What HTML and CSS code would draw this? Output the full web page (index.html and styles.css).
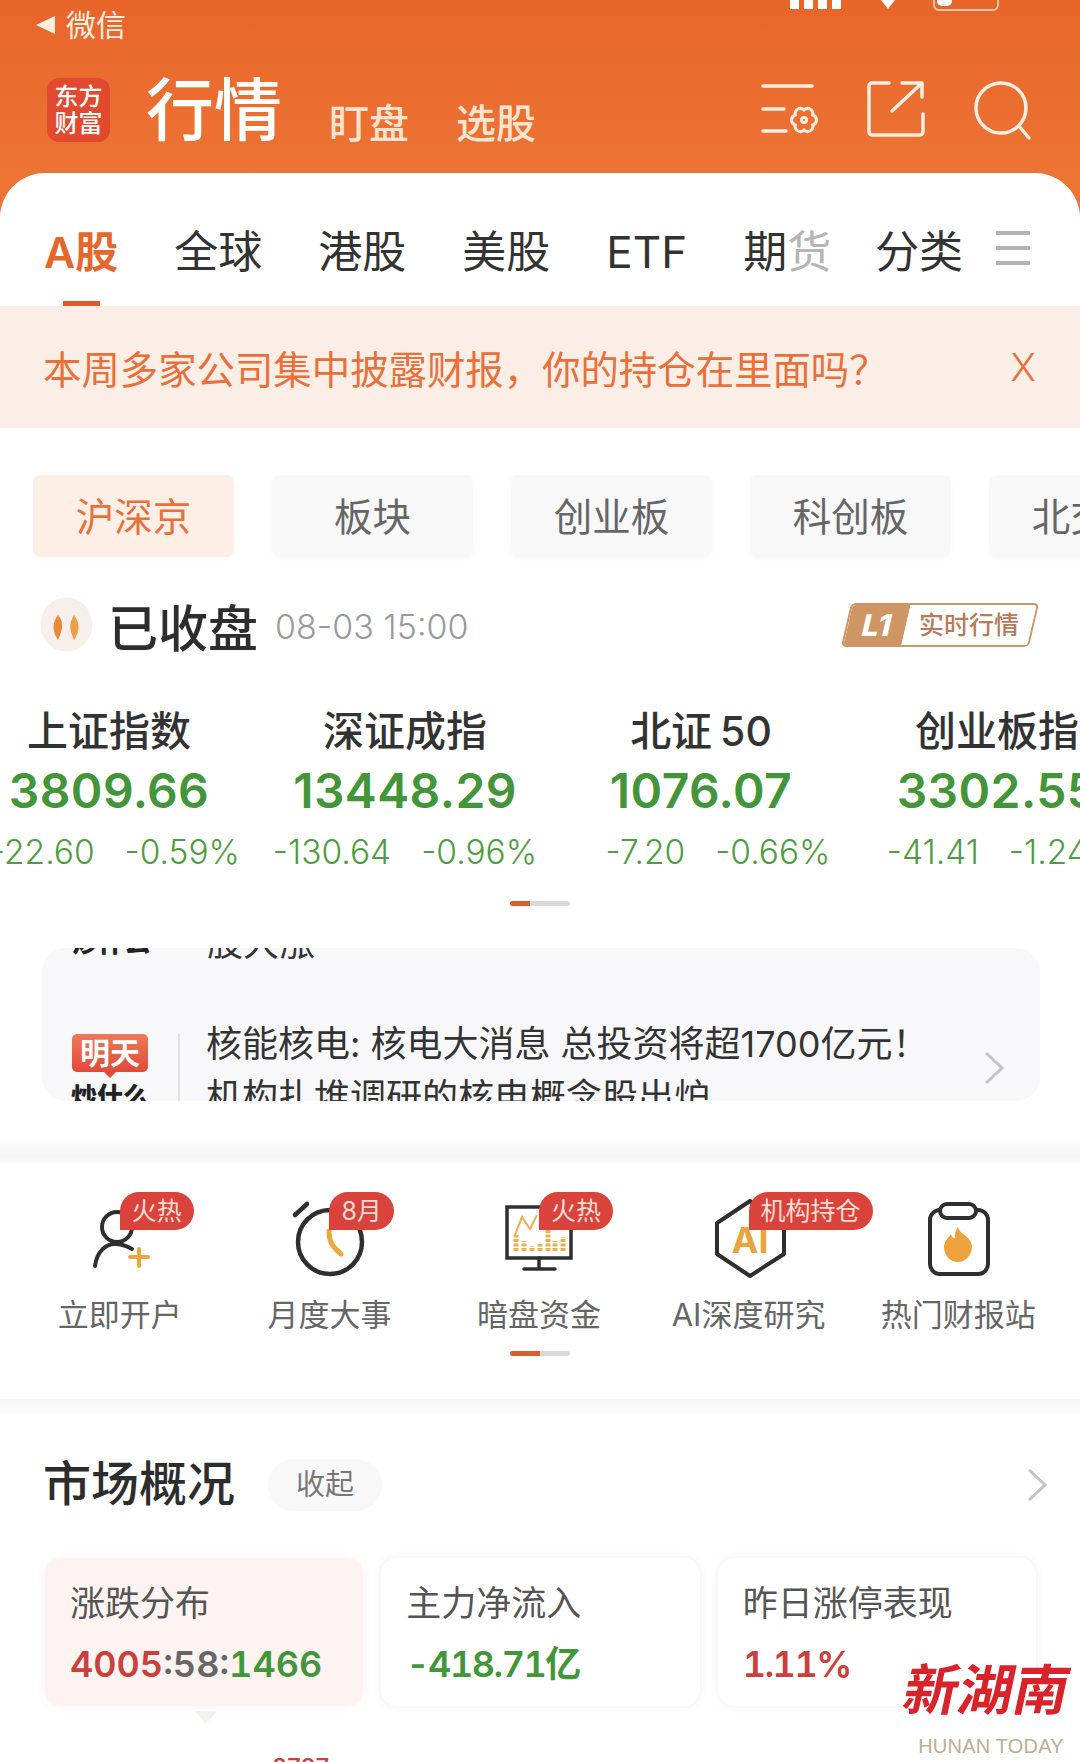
FILE: index.html
```html
<!DOCTYPE html>
<html>
  <head>
    <meta charset="utf-8">
    <title>行情</title>
    <link rel="stylesheet" href="styles.css">
  </head>
  <body>
    <div class="page">
      <header class="top">
        <div class="status-row">
          <span class="back-arrow"></span>
          <span class="back-text">微信</span>
          <svg class="sys-icons" width="209" height="11" viewBox="0 0 209 11">
            <rect x="0" y="0" width="9" height="9" fill="#fff"/>
            <rect x="14" y="0" width="9" height="9" fill="#fff"/>
            <rect x="28" y="0" width="9" height="9" fill="#fff"/>
            <rect x="42" y="0" width="9" height="9" fill="#fff"/>
            <path d="M91 0H105L98 9Z" fill="#fff"/>
            <path d="M144 -4V5a5 5 0 0 0 5 5H203a5 5 0 0 0 5-5V-4" fill="none" stroke="#f7c6a4" stroke-width="2"/>
            <rect x="147" y="-6" width="15" height="12" rx="5" fill="#fff"/>
          </svg>
        </div>
        <div class="nav-row">
          <div class="logo"><span>东方</span><span>财富</span></div>
          <h1 class="title">行情</h1>
          <span class="sub-link first">盯盘</span>
          <span class="sub-link">选股</span>
          <div class="nav-icons">
            <svg class="nav-gear" width="62" height="54" viewBox="0 0 62 54" fill="none" stroke="#fdeee2" stroke-width="3.500" stroke-linecap="round">
              <path d="M2 3H51M2 26H23M2 48H25"/>
              <path stroke-width="3" d="M51.700 32A5.200 5.200 0 0 1 51.700 42A5.200 5.200 0 0 1 43 47A5.200 5.200 0 0 1 34.300 42A5.200 5.200 0 0 1 34.300 32A5.200 5.200 0 0 1 43 27A5.200 5.200 0 0 1 51.700 32Z"/>
              <circle cx="43" cy="37" r="2.500" stroke-width="3"/>
            </svg>
            <svg width="60" height="58" viewBox="0 0 60 58" fill="none" stroke="#fdeee2" stroke-width="3.500" stroke-linecap="round" stroke-linejoin="round">
              <path d="M24 4H7a3 3 0 0 0-3 3V53a3 3 0 0 0 3 3H55a3 3 0 0 0 3-3V35"/>
              <path d="M27 32L57 4M37 4H57V18"/>
            </svg>
            <svg width="64" height="62" viewBox="0 0 64 62" fill="none" stroke="#fdeee2" stroke-width="3.500" stroke-linecap="round">
              <circle cx="32" cy="29" r="25"/>
              <path d="M50 47L60 59"/>
            </svg>
          </div>
        </div>
      </header>

      <main class="sheet">
        <nav class="tabs">
          <span class="tab tab-on">A股</span>
          <span class="tab">全球</span>
          <span class="tab">港股</span>
          <span class="tab">美股</span>
          <span class="tab">ETF</span>
          <span class="tab">期<span class="tab-fade">货</span></span>
          <span class="tab tab-tight">分类</span>
          <span class="tab-menu"><i></i><i></i><i></i></span>
        </nav>

        <div class="notice">
          <span>本周多家公司集中披露财报，你的持仓在里面吗？</span>
          <span class="notice-close">X</span>
        </div>

        <div class="pills">
          <span class="pill pill-on">沪深京</span>
          <span class="pill">板块</span>
          <span class="pill">创业板</span>
          <span class="pill">科创板</span>
          <span class="pill">北交所</span>
        </div>

        <div class="market-state">
          <svg class="state-icon" width="53" height="55" viewBox="0 0 53 55">
            <ellipse cx="26.500" cy="27.500" rx="26" ry="27" fill="#f6efea"/>
            <path d="M18 18C23 24 24 30 18 43C12 34 12 26 18 18Z" fill="#e88a3c"/>
            <path d="M34 18C40 26 40 34 34 43C29 32 29 26 34 18Z" fill="#eda04a"/>
          </svg>
          <span class="state-text">已收盘</span>
          <span class="state-time">08-03 15:00</span>
          <div class="level-tag">
            <span class="level-name"><b>L1</b></span>
            <span class="level-text"><b>实时行情</b></span>
          </div>
        </div>

        <div class="indices">
          <div class="index">
            <div class="index-name">上证指数</div>
            <div class="index-value">3809.66</div>
            <div class="index-change nudge-s"><span>-22.60</span><span>-0.59%</span></div>
          </div>
          <div class="index">
            <div class="index-name">深证成指</div>
            <div class="index-value">13448.29</div>
            <div class="index-change"><span>-130.64</span><span>-0.96%</span></div>
          </div>
          <div class="index">
            <div class="index-name">北证 50</div>
            <div class="index-value">1076.07</div>
            <div class="index-change nudge-l"><span>-7.20</span><span>-0.66%</span></div>
          </div>
          <div class="index">
            <div class="index-name">创业板指</div>
            <div class="index-value">3302.55</div>
            <div class="index-change nudge-s"><span>-41.41</span><span>-1.24%</span></div>
          </div>
        </div>

        <div class="pager pager-short"><i></i></div>

        <section class="ticker">
          <div class="ticker-old">
            <span class="ticker-old-logo">炒什么</span>
            <span class="ticker-old-text">股大涨</span>
          </div>
          <div class="ticker-item">
            <div class="ticker-logo">
              <span class="ticker-flag">明天</span>
              <span class="ticker-word">炒什么</span>
            </div>
            <span class="ticker-rule"></span>
            <div class="ticker-lines">
              <div>核能核电: 核电大消息 总投资将超1700亿元！</div>
              <div>机构扎堆调研的核电概念股出炉</div>
            </div>
            <svg class="chevron ticker-go" width="20" height="32" viewBox="0 0 20 32" fill="none" stroke="#c4c4c6" stroke-width="3">
              <path d="M2 1L18 16L2 31"/>
            </svg>
          </div>
        </section>

        <div class="band band-tall"></div>

        <div class="tools">
          <div class="tool">
            <svg width="100" height="90" viewBox="0 0 100 90" fill="none" stroke="#2f2f2f" stroke-width="4" stroke-linecap="round">
              <circle cx="47" cy="36" r="15"/>
              <path d="M25 75C27 60 36 53 45 53C52 53 57 55 62 58"/>
              <path stroke="#eba83f" d="M60 66H78M69 58V75"/>
            </svg>
            <span class="hot-tag">火热</span>
            <span class="tool-name">立即开户</span>
          </div>
          <div class="tool">
            <svg width="100" height="90" viewBox="0 0 100 90" fill="none" stroke="#2f2f2f" stroke-width="4.500" stroke-linecap="round">
              <circle cx="51" cy="51" r="32"/>
              <path d="M16 24L28 13"/>
              <path stroke="#eba83f" stroke-width="5" d="M50 40C50 52 54 56 62 63"/>
            </svg>
            <span class="hot-tag">8月</span>
            <span class="tool-name">月度大事</span>
          </div>
          <div class="tool">
            <svg width="100" height="90" viewBox="0 0 100 90" fill="none" stroke="#2f2f2f" stroke-width="3.500">
              <rect x="18" y="16" width="64" height="51"/>
              <path d="M50 67V78M35 78H66" stroke-linecap="round"/>
              <path stroke="#e9b04e" stroke-width="2" d="M26 44L33 26L41 38L48 24"/>
              <path stroke="#e9b04e" stroke-width="5" stroke-dasharray="3 1.500" d="M27 60V44M35 60V50M43 60V55M51 60V53M59 60V38M66 60V50M74 60V46"/>
            </svg>
            <span class="hot-tag">火热</span>
            <span class="tool-name">暗盘资金</span>
          </div>
          <div class="tool">
            <svg width="100" height="90" viewBox="0 0 100 90" fill="none" stroke="#2f2f2f" stroke-width="4" stroke-linejoin="round">
              <path d="M51 10L18 32V63L51 85L85 63V32Z"/>
              <text class="tool-ai" x="51" y="62" text-anchor="middle">AI</text>
            </svg>
            <span class="hot-tag">机构持仓</span>
            <span class="tool-name">AI深度研究</span>
          </div>
          <div class="tool">
            <svg width="100" height="90" viewBox="0 0 100 90" fill="none" stroke="#2f2f2f" stroke-width="4">
              <rect x="22" y="19" width="58" height="64" rx="10"/>
              <rect x="32" y="13" width="36" height="14" rx="7" fill="#fff"/>
              <path stroke="none" fill="#eea23e" d="M50 36C52 44 62 44 64 55C64 65 57 71 50 71C43 71 36 65 36 56C36 50 41 46 43 43C44 47 46 48 47 47C47 43 47 40 50 36Z"/>
            </svg>
            <span class="tool-name">热门财报站</span>
          </div>
        </div>

        <div class="pager pager-half"><i></i></div>

        <div class="band"></div>

        <section class="overview">
          <div class="overview-head">
            <h2>市场概况</h2>
            <span class="fold">收起</span>
            <svg class="chevron" width="20" height="32" viewBox="0 0 20 32" fill="none" stroke="#c4c4c6" stroke-width="3">
              <path d="M2 1L18 16L2 31"/>
            </svg>
          </div>
          <div class="stat-cards">
            <div class="stat-card stat-on">
              <div class="stat-name">涨跌分布</div>
              <div class="stat-value"><span class="up">4005</span><span class="flat">:58:</span><span class="down">1466</span></div>
            </div>
            <div class="stat-card">
              <div class="stat-name">主力净流入</div>
              <div class="stat-value stat-tight down">-418.71亿</div>
            </div>
            <div class="stat-card">
              <div class="stat-name">昨日涨停表现</div>
              <div class="stat-value stat-tight up">1.11%</div>
            </div>
          </div>
          <span class="stat-pointer"></span>
          <div class="chart-peak">8787</div>
        </section>
      </main>

      <div class="watermark">
        <div class="watermark-cn">新湖南</div>
        <div class="watermark-en">HUNAN TODAY</div>
      </div>
    </div>
  </body>
</html>
```

FILE: styles.css
```css
* {
  box-sizing: border-box;
}
body {
  margin: 0;
  font-family: Inter, "Noto Sans CJK SC", sans-serif;
  color: #333;
}
h1,
h2 {
  margin: 0;
}
.page {
  position: relative;
  width: 1080px;
  height: 1762px;
  overflow: hidden;
  background: linear-gradient(180deg, #e8652a 0, #ec7434 175px, #ec7434 230px);
}
.top {
  height: 173px;
  color: #fff;
}
.status-row {
  display: flex;
  align-items: center;
  height: 50px;
  padding-left: 36px;
}
.back-arrow {
  width: 0;
  height: 0;
  border-top: 9px solid transparent;
  border-bottom: 9px solid transparent;
  border-right: 19px solid #fdeee2;
}
.back-text {
  margin-left: 11px;
  font-size: 30px;
  line-height: 48px;
  color: #fdeee2;
}
.sys-icons {
  align-self: flex-start;
  margin-left: auto;
  margin-right: 81px;
}
.nav-row {
  display: flex;
  align-items: flex-start;
  padding: 28px 47px 0 47px;
}
.logo {
  display: flex;
  flex-direction: column;
  justify-content: center;
  align-items: center;
  width: 63px;
  height: 64px;
  border-radius: 12px;
  background: #e2492f;
  font-size: 24px;
  font-weight: 500;
  line-height: 27px;
}
.title {
  margin-left: 36px;
  font-size: 68px;
  font-weight: 500;
  line-height: 64px;
}
.sub-link {
  margin: 26px 0 0 47px;
  font-size: 40px;
  font-weight: 500;
  line-height: 40px;
  color: #fde3d2;
}
.nav-icons {
  display: flex;
  gap: 44px;
  margin-left: auto;
  padding-top: 1px;
}
.nav-gear {
  margin-top: 4px;
  margin-right: -2px;
}
.sheet {
  height: 1589px;
  border-radius: 45px 45px 0 0;
  background: #fff;
}
.tabs {
  display: flex;
  align-items: flex-start;
  gap: 56px;
  height: 133px;
  padding: 50px 0 0 44px;
}
.tab {
  position: relative;
  flex: none;
  font-size: 44px;
  line-height: 58px;
  white-space: nowrap;
  color: #333;
}
.tab-on {
  font-weight: 600;
  color: #e4672e;
  font-size: 43px;
}
.tab-on::after {
  content: "";
  position: absolute;
  left: 19px;
  top: 78px;
  width: 37px;
  height: 5px;
  background: #df5a2b;
}
.tab-fade {
  color: #b5b5b5;
}
.tab-tight {
  margin-left: -12px;
}
.tab-menu {
  display: flex;
  flex: 0 0 34px;
  flex-direction: column;
  gap: 11px;
  margin-left: -23px;
  padding-top: 8px;
}
.tab-menu i {
  height: 4px;
  background: #b4b4b4;
}
.notice {
  display: flex;
  justify-content: space-between;
  align-items: center;
  height: 122px;
  padding: 0 44px 0 43px;
  background: #fbeee6;
  font-size: 38.4px;
  color: #e8703a;
}
.notice-close {
  font-weight: 300;
}
.pills {
  display: flex;
  gap: 38px;
  margin: 47px 0 0 33px;
  overflow: hidden;
  padding-bottom: 6px;
}
.pill {
  flex: 0 0 201px;
  height: 82px;
  border-radius: 8px;
  background: #f8f8f9;
  font-size: 38.5px;
  line-height: 84px;
  text-align: center;
  color: #666;
  box-shadow: 0 1px 6px rgba(0, 0, 0, 0.03);
}
.pill-on {
  background: #fdeee6;
  color: #e8703a;
}
.market-state {
  display: flex;
  align-items: center;
  height: 55px;
  margin: 34px 46px 0 40px;
}
.state-text {
  margin-left: 15px;
  font-size: 50px;
  font-weight: 500;
  color: #2d2d2d;
}
.state-time {
  margin: 3px 0 0 17px;
  font-size: 34px;
  font-weight: 300;
  color: #9a9a9a;
}
.level-tag {
  display: flex;
  width: 188px;
  height: 44px;
  margin-left: auto;
  border: 2px solid #cf9665;
  border-radius: 5px;
  transform: skewX(-13deg);
  overflow: hidden;
}
.level-name {
  width: 58px;
  background: #cf9665;
  font-size: 30px;
  line-height: 40px;
  text-align: center;
  color: #fff;
}
.level-text {
  flex: 1;
  background: #fff;
  font-size: 25px;
  line-height: 40px;
  text-align: center;
  white-space: nowrap;
  color: #b87a5c;
}
.level-name b {
  display: inline-block;
  font-weight: 800;
}
.level-text b {
  display: inline-block;
  font-weight: 500;
  transform: skewX(13deg);
}
.indices {
  display: grid;
  grid-template-columns: repeat(4, 296px);
  margin: 54px 0 0 -39px;
  text-align: center;
}
.index {
  display: flex;
  flex-direction: column;
  align-items: center;
  white-space: nowrap;
}
.index-name {
  font-size: 41px;
  font-weight: 500;
  line-height: 50px;
  word-spacing: -3px;
  color: #333;
}
.index-value {
  margin-top: 6px;
  font-size: 48px;
  font-weight: 600;
  line-height: 58px;
  letter-spacing: 0.4px;
  color: #43953a;
}
.index-change {
  display: flex;
  gap: 30px;
  margin-top: 12px;
  font-size: 33.5px;
  font-weight: 300;
  line-height: 40px;
  color: #4f9c44;
}
.nudge-s {
  padding-left: 12px;
}
.nudge-l {
  padding-left: 34px;
}
.pager {
  width: 60px;
  height: 5px;
  margin: 29px auto 0;
  border-radius: 3px;
  background: #d9d9d9;
  overflow: hidden;
}
.pager i {
  display: block;
  height: 5px;
  background: #d9602e;
}
.pager-short i {
  width: 20px;
}
.pager-half {
  margin-top: 14px;
}
.pager-half i {
  width: 30px;
}
.ticker {
  height: 153px;
  margin: 42px 40px 0 42px;
  border-radius: 24px;
  background: #f8f8fa;
  overflow: hidden;
}
.ticker-old {
  display: flex;
  height: 53px;
  margin-top: -31px;
  padding-left: 30px;
}
.ticker-old-logo {
  width: 135px;
  margin-top: 11px;
  font-size: 26px;
  font-weight: 900;
  line-height: 30px;
  color: #222;
}
.ticker-old-text {
  font-size: 36px;
  line-height: 53px;
  color: #333;
}
.ticker-item {
  display: flex;
  align-items: center;
  height: 106px;
  margin-top: 48px;
  padding: 0 36px 0 30px;
}
.ticker-logo {
  display: flex;
  flex-direction: column;
  align-items: center;
  align-self: flex-start;
  width: 76px;
  padding-top: 16px;
}
.ticker-flag {
  position: relative;
  width: 76px;
  height: 38px;
  border-radius: 5px;
  background: linear-gradient(180deg, #ec7a5a, #e04a38);
  font-size: 30px;
  font-weight: 700;
  line-height: 38px;
  text-align: center;
  color: #fff;
}
.ticker-flag::after {
  content: "";
  position: absolute;
  left: 32px;
  top: 38px;
  border-left: 6px solid transparent;
  border-right: 6px solid transparent;
  border-top: 6px solid #e04a38;
}
.ticker-word {
  margin-top: 10px;
  font-size: 26px;
  font-weight: 900;
  line-height: 30px;
  white-space: nowrap;
  color: #222;
}
.ticker-rule {
  align-self: stretch;
  width: 2px;
  margin: 16px 0 0 30px;
  background: #e2e2e4;
}
.ticker-lines {
  align-self: stretch;
  flex: 1;
  margin-left: 26px;
  font-size: 36px;
  line-height: 53px;
  white-space: nowrap;
  color: #333;
}
.ticker-go {
  margin-top: -6px;
}
.band {
  height: 14px;
  margin-top: 43px;
  background: linear-gradient(180deg, #f6f6f6, #fbfbfb);
}
.band-tall {
  height: 23px;
  margin-top: 40px;
  background: linear-gradient(180deg, #fcfcfc, #f6f6f6 70%, #fbfbfb);
}
.tools {
  display: grid;
  grid-template-columns: repeat(5, 209.6px);
  margin-left: 15px;
  padding-top: 27px;
}
.tool {
  position: relative;
  display: flex;
  flex-direction: column;
  align-items: center;
}
.tool-name {
  margin-top: 12px;
  font-size: 31px;
  line-height: 44px;
  white-space: nowrap;
  color: #666;
}
.tool-ai {
  font-size: 36px;
  font-weight: 700;
  fill: #e9a43f;
  stroke: none;
}
.hot-tag {
  position: absolute;
  top: 1px;
  left: 50%;
  height: 38px;
  padding: 0 12px 0 12px;
  border-radius: 19px 19px 19px 0;
  background: #d9433b;
  font-size: 25px;
  line-height: 38px;
  white-space: nowrap;
  color: #fbdcd3;
}
.overview {
  padding: 46px 33px 0 45px;
}
.overview-head {
  display: flex;
  align-items: center;
  height: 52px;
}
.overview-head h2 {
  margin: -3px 0 0 -2px;
  font-size: 48px;
  font-weight: 500;
  line-height: 64px;
  color: #2d2d2d;
}
.fold {
  width: 114px;
  height: 52px;
  margin-left: 33px;
  border-radius: 26px;
  background: #f8f8f8;
  font-size: 29px;
  line-height: 52px;
  text-align: center;
  color: #777;
}
.overview-head .chevron {
  margin-left: auto;
}
.stat-cards {
  display: flex;
  gap: 18px;
  width: 991px;
  margin-top: 47px;
}
.stat-card {
  flex: 1;
  height: 148px;
  padding: 27px 0 0 25px;
  border-radius: 16px;
  background: #fff;
  box-shadow: 0 0 10px rgba(0, 0, 0, 0.08);
}
.stat-on {
  background: #fdf4f1;
  box-shadow: 0 0 8px rgba(230, 120, 90, 0.1);
}
.stat-name {
  font-size: 35px;
  line-height: 36px;
  color: #555;
}
.stat-value {
  margin-top: 23px;
  font-size: 36px;
  font-weight: 600;
  font-variant-numeric: tabular-nums;
  line-height: 40px;
}
.stat-tight {
  letter-spacing: -1.5px;
}
.up {
  color: #c9403c;
}
.down {
  color: #43953a;
}
.flat {
  color: #666;
}
.stat-pointer {
  display: block;
  width: 0;
  height: 0;
  margin: 5px 0 0 150px;
  border-left: 11px solid transparent;
  border-right: 11px solid transparent;
  border-top: 13px solid #f4f1ee;
}
.chart-peak {
  margin: 32px 0 0 227px;
  font-size: 24px;
  font-weight: 500;
  line-height: 24px;
  color: #c9403c;
}
.watermark {
  position: absolute;
  left: 903px;
  top: 1650px;
  width: 168px;
  text-align: center;
}
.watermark-cn {
  font-size: 55px;
  font-weight: 700;
  line-height: 80px;
  white-space: nowrap;
  color: #d8232a;
  transform: skewX(-12deg);
  text-shadow: 0 0 6px rgba(255, 255, 255, 0.9);
}
.watermark-en {
  margin: 4px 0 0 8px;
  font-family: "Liberation Sans", sans-serif;
  font-size: 20px;
  line-height: 24px;
  letter-spacing: 0.2px;
  white-space: nowrap;
  color: #bcae97;
}
```
